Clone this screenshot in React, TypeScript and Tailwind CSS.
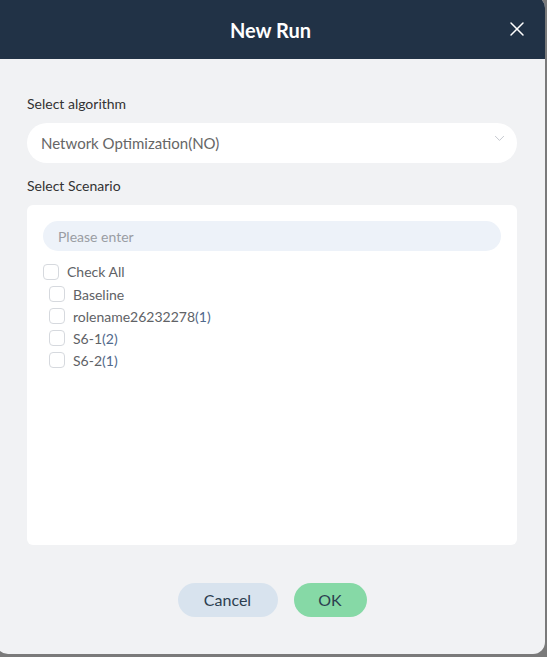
import { X } from "lucide-react";

type Scenario = {
  name: string;
  count?: number;
};

const SCENARIOS: Scenario[] = [
  { name: "Baseline" },
  { name: "rolename26232278", count: 1 },
  { name: "S6-1", count: 2 },
  { name: "S6-2", count: 1 },
];

const FONT = "font-['Lato','Noto_Sans',sans-serif]";

function Box() {
  return (
    <span className="h-4 w-4 shrink-0 rounded-[4px] border border-[#d6d9de] bg-white" />
  );
}

function ChevronDown() {
  return (
    <svg viewBox="0 0 12 8" className="h-[7px] w-[11px]" fill="none" stroke="#c3c7cd" strokeWidth={1.1}>
      <path d="M1 1.2l5 5 5-5" />
    </svg>
  );
}

export default function App() {
  return (
    <div className={`h-[657px] w-[547px] overflow-hidden bg-[#7a7a7a] ${FONT}`}>
      <div className="-ml-1 -mt-1 flex h-[658px] w-[549px] flex-col overflow-hidden rounded-[12px] bg-[#f1f2f4]">
        <div className="relative flex h-[63px] shrink-0 items-center justify-center bg-[#213246] pt-1">
          <span className="text-[20px] font-bold text-white">New Run</span>
          <X className="absolute right-[16px] top-[21px] h-6 w-6 text-white" strokeWidth={1.5} />
        </div>

        <div className="flex flex-1 flex-col pl-[31px] pr-[28px] pt-[34px]">
          <div className="text-[14px] leading-[22px] text-[#333]">Select algorithm</div>
          <div className="mt-[8px] flex h-10 items-center justify-between rounded-full bg-white pl-[14px] pr-[12px]">
            <span className="text-[15px] text-[#666]">Network Optimization(NO)</span>
            <div className="-mt-[10px]">
              <ChevronDown />
            </div>
          </div>

          <div className="mt-[12px] text-[14px] leading-[22px] text-[#333]">Select Scenario</div>
          <div className="mt-[8px] h-[340px] rounded-[6px] bg-white px-4 pt-4">
            <div className="flex h-[30px] items-center rounded-full bg-[#edf2f9] pl-[15px] text-[14px] text-[#9a9da3]">
              Please enter
            </div>
            <div className="mt-[10px] flex items-center gap-2 text-[14px] leading-[22px] text-[#606266]">
              <Box />
              <span>Check All</span>
            </div>
            <div className="flex flex-col pl-[6px]">
              {SCENARIOS.map((s) => (
                <div key={s.name} className="flex h-[22px] items-center gap-2 text-[14px] text-[#606266]">
                  <Box />
                  <span>
                    {s.name}
                    {s.count !== undefined && <span className="text-[#50698c]">({s.count})</span>}
                  </span>
                </div>
              ))}
            </div>
          </div>

          <div className="mt-[38px] flex justify-center gap-4">
            <button className="h-[34px] w-[100px] rounded-full bg-[#d8e3ee] text-[16px] text-[#2c3e50]">
              Cancel
            </button>
            <button className="h-[34px] w-[73px] rounded-full bg-[#86d9a6] text-[16px] text-[#2c3e50]">
              OK
            </button>
          </div>
        </div>
      </div>
    </div>
  );
}
